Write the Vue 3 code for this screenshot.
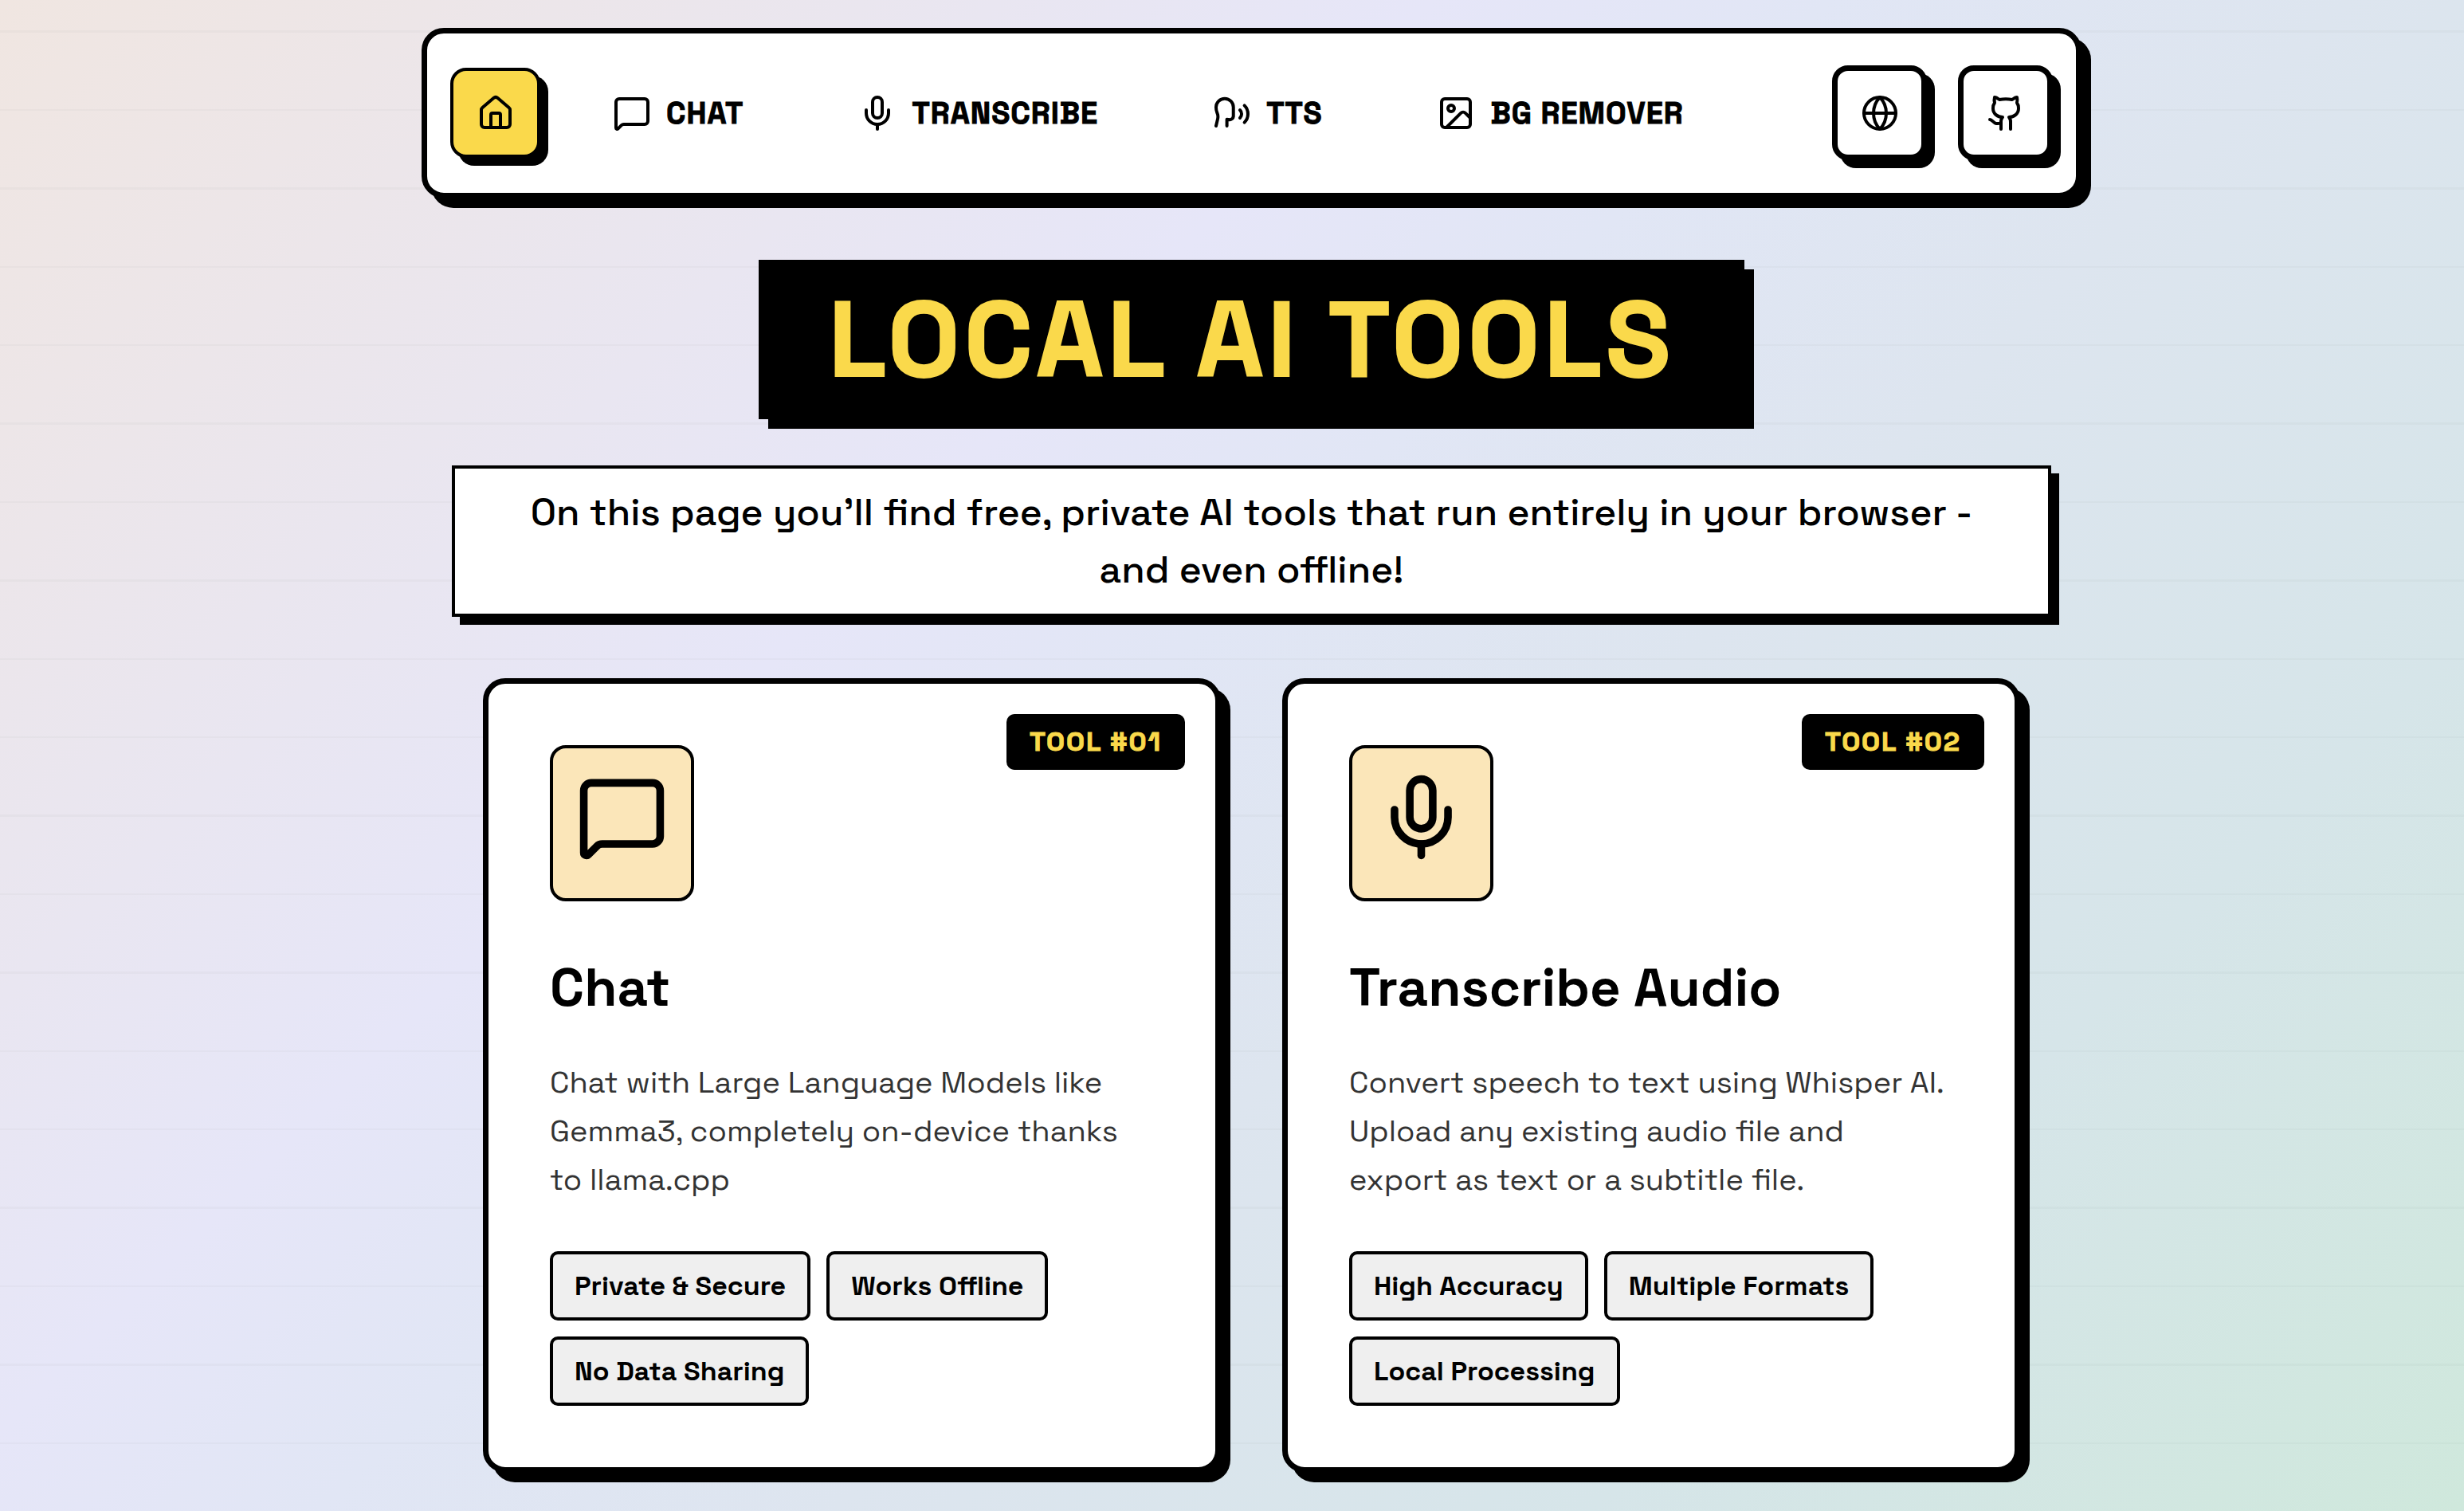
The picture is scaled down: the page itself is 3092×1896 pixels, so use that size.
<script setup>
const icons = {
  home: [
    'M15 21v-8a1 1 0 0 0-1-1h-4a1 1 0 0 0-1 1v8',
    'M3 10a2 2 0 0 1 .709-1.528l7-5.999a2 2 0 0 1 2.582 0l7 5.999A2 2 0 0 1 21 10v9a2 2 0 0 1-2 2H5a2 2 0 0 1-2-2z',
  ],
  chat: [
    'M22 17a2 2 0 0 1-2 2H6.828a2 2 0 0 0-1.414.586l-2.202 2.202A.71.71 0 0 1 2 21.286V5a2 2 0 0 1 2-2h16a2 2 0 0 1 2 2z',
  ],
  mic: [
    'M12 19v3',
    'M19 10v2a7 7 0 0 1-14 0v-2',
    'M12 2a3 3 0 0 1 3 3v7a3 3 0 0 1-6 0V5a3 3 0 0 1 3-3z',
  ],
  speech: [
    'M8.8 20v-4.1l1.9.2a2.3 2.3 0 0 0 2.164-2.1V8.3A5.37 5.37 0 0 0 2 8.25c0 2.8.656 3.054 1 4.55a5.77 5.77 0 0 1 .029 2.758L2 20',
    'M19.8 17.8a7.5 7.5 0 0 0 .003-10.603',
    'M17 15a3.5 3.5 0 0 0-.025-4.975',
  ],
  image: [
    'M5 3h14a2 2 0 0 1 2 2v14a2 2 0 0 1-2 2H5a2 2 0 0 1-2-2V5a2 2 0 0 1 2-2z',
    'M11 9a2 2 0 1 1-4 0a2 2 0 1 1 4 0z',
    'M21 15l-3.086-3.086a2 2 0 0 0-2.828 0L6 21',
  ],
  globe: [
    'M22 12a10 10 0 1 1-20 0a10 10 0 1 1 20 0z',
    'M12 2a14.5 14.5 0 0 0 0 20 14.5 14.5 0 0 0 0-20',
    'M2 12h20',
  ],
  github: [
    'M15 22v-4a4.8 4.8 0 0 0-1-3.5c3 0 6-2 6-5.5.08-1.25-.27-2.48-1-3.5.28-1.15.28-2.35 0-3.5 0 0-1 0-3 1.5-2.64-.5-5.36-.5-8 0C6 2 5 2 5 2c-.3 1.15-.3 2.35 0 3.5A5.403 5.403 0 0 0 4 9c0 3.5 3 5.5 6 5.5-.39.49-.68 1.05-.85 1.65-.17.6-.22 1.23-.15 1.85v4',
    'M9 18c-4.51 2-5-2-7-2',
  ],
}

const links = [
  { label: 'CHAT', icon: 'chat' },
  { label: 'TRANSCRIBE', icon: 'mic' },
  { label: 'TTS', icon: 'speech' },
  { label: 'BG REMOVER', icon: 'image' },
]

const tools = [
  {
    badge: 'TOOL #01',
    icon: 'chat',
    title: 'Chat',
    text: 'Chat with Large Language Models like Gemma3, completely on-device thanks to llama.cpp',
    tags: ['Private & Secure', 'Works Offline', 'No Data Sharing'],
  },
  {
    badge: 'TOOL #02',
    icon: 'mic',
    title: 'Transcribe Audio',
    text: 'Convert speech to text using Whisper AI. Upload any existing audio file and export as text or a subtitle file.',
    tags: ['High Accuracy', 'Multiple Formats', 'Local Processing'],
  },
]
</script>

<template>
  <div class="page">
    <div class="container">
      <nav class="navbar">
        <a class="square home" href="#" aria-label="Home">
          <svg class="icon" viewBox="0 0 24 24"><path v-for="d in icons.home" :key="d" :d="d" /></svg>
        </a>
        <div class="links">
          <a v-for="link in links" :key="link.label" class="link" href="#">
            <svg class="icon" viewBox="0 0 24 24"><path v-for="d in icons[link.icon]" :key="d" :d="d" /></svg>
            <span>{{ link.label }}</span>
          </a>
        </div>
        <div class="actions">
          <button class="square" type="button" aria-label="Language">
            <svg class="icon" viewBox="0 0 24 24"><path v-for="d in icons.globe" :key="d" :d="d" /></svg>
          </button>
          <a class="square" href="#" aria-label="GitHub">
            <svg class="icon" viewBox="0 0 24 24"><path v-for="d in icons.github" :key="d" :d="d" /></svg>
          </a>
        </div>
      </nav>

      <header class="hero">
        <h1 class="headline">LOCAL AI TOOLS</h1>
        <p class="intro">
          On this page you’ll find free, private AI tools that run entirely in your browser - and even offline!
        </p>
      </header>

      <main class="cards">
        <article v-for="tool in tools" :key="tool.title" class="card">
          <span class="badge">{{ tool.badge }}</span>
          <div class="tile">
            <svg class="icon large" viewBox="0 0 24 24"><path v-for="d in icons[tool.icon]" :key="d" :d="d" /></svg>
          </div>
          <h2 class="title">{{ tool.title }}</h2>
          <p class="text">{{ tool.text }}</p>
          <ul class="tags">
            <li v-for="tag in tool.tags" :key="tag" class="tag">{{ tag }}</li>
          </ul>
        </article>
      </main>
    </div>
  </div>
</template>

<style>
body {
  margin: 0;
}
</style>

<style scoped>
.page,
.page * {
  box-sizing: border-box;
}

.page {
  min-height: 100vh;
  padding: 35px 0 48px 49px;
  color: #000;
  font-family: "Space Grotesk", Inter, "Liberation Sans", sans-serif;
  background-image:
    linear-gradient(
      transparent 38px, rgba(0, 0, 0, 0.025) 38px 41px,
      transparent 41px 137px, rgba(0, 0, 0, 0.025) 137px 139px,
      transparent 139px 235px, rgba(0, 0, 0, 0.025) 235px 238px,
      transparent 238px 334px, rgba(0, 0, 0, 0.025) 334px 336px,
      transparent 336px 432px, rgba(0, 0, 0, 0.025) 432px 434px,
      transparent 434px
    ),
    linear-gradient(135deg, #f0e6e1 0%, #e6e6f8 36%, #e1e6f5 46%, #dde5ef 59%, #d6e5e9 78%, #cfe8dc 100%);
  background-size: 100% 492px, 100% 100%;
}

.container {
  max-width: 2083px;
  margin: 0 auto;
}

.navbar {
  display: flex;
  align-items: center;
  padding: 40px 29px 41px;
  border: 7px solid #000;
  border-radius: 28px;
  background: #fff;
  box-shadow: 12px 12px 0 #000;
}

.square {
  display: flex;
  align-items: center;
  justify-content: center;
  width: 119px;
  height: 119px;
  padding: 0;
  border: 7px solid #000;
  border-radius: 20px;
  background: #fff;
  color: #000;
  box-shadow: 10px 10px 0 #000;
}

.home {
  width: 113px;
  height: 113px;
  border-width: 4px;
  background: #fad94b;
}

.icon {
  display: block;
  width: 48px;
  height: 48px;
  fill: none;
  stroke: currentColor;
  stroke-width: 2;
  stroke-linecap: round;
  stroke-linejoin: round;
}

.large {
  width: 115px;
  height: 115px;
}

.links {
  display: flex;
  flex: 1;
  gap: 144px;
  padding-left: 91px;
}

.link {
  display: flex;
  align-items: center;
  gap: 19px;
  color: #000;
  font-size: 38px;
  font-weight: 700;
  line-height: 48px;
  letter-spacing: 1px;
  -webkit-text-stroke: 1px currentColor;
  text-decoration: none;
  white-space: nowrap;
}

.actions {
  display: flex;
  gap: 39px;
}

.hero {
  display: flex;
  flex-direction: column;
  align-items: center;
  gap: 58px;
  padding: 77px 38px;
}

.headline {
  margin: 0;
  padding: 29px 88px;
  background: #000;
  color: #fad94b;
  font-size: 134px;
  font-weight: 700;
  line-height: 142px;
  letter-spacing: 5px;
  -webkit-text-stroke: 2px currentColor;
  box-shadow: 12px 12px 0 #000;
}

.intro {
  width: 100%;
  margin: 0;
  padding: 19px 77px;
  border: 4px solid #000;
  background: #fff;
  font-size: 48px;
  font-weight: 500;
  line-height: 72px;
  text-align: center;
  box-shadow: 10px 10px 0 #000;
}

.cards {
  display: grid;
  grid-template-columns: 1fr 1fr;
  gap: 77px;
  padding: 0 77px;
}

.card {
  position: relative;
  padding: 77px;
  border: 7px solid #000;
  border-radius: 28px;
  background: #fff;
  box-shadow: 12px 12px 0 #000;
}

.badge {
  position: absolute;
  top: 38px;
  right: 38px;
  padding: 14px 29px;
  border-radius: 10px;
  background: #000;
  color: #fad94b;
  font-size: 34px;
  font-weight: 700;
  line-height: 42px;
  letter-spacing: 2px;
  -webkit-text-stroke: 1px currentColor;
}

.tile {
  width: fit-content;
  padding: 29px 29px 44px;
  border: 4px solid #000;
  border-radius: 20px;
  background: #fbe6b9;
}

.title {
  margin: 67px 0 48px;
  font-size: 67px;
  font-weight: 700;
  line-height: 82px;
}

.text {
  margin: 0 0 59px;
  padding-right: 8px;
  color: #333;
  font-size: 38px;
  line-height: 61px;
}

.tags {
  display: flex;
  flex-wrap: wrap;
  gap: 20px;
  margin: 0;
  padding: 0;
  list-style: none;
}

.tag {
  padding: 19px 27px;
  border: 4px solid #000;
  border-radius: 10px;
  background: #efefef;
  font-size: 34px;
  font-weight: 700;
  line-height: 41px;
}
</style>
